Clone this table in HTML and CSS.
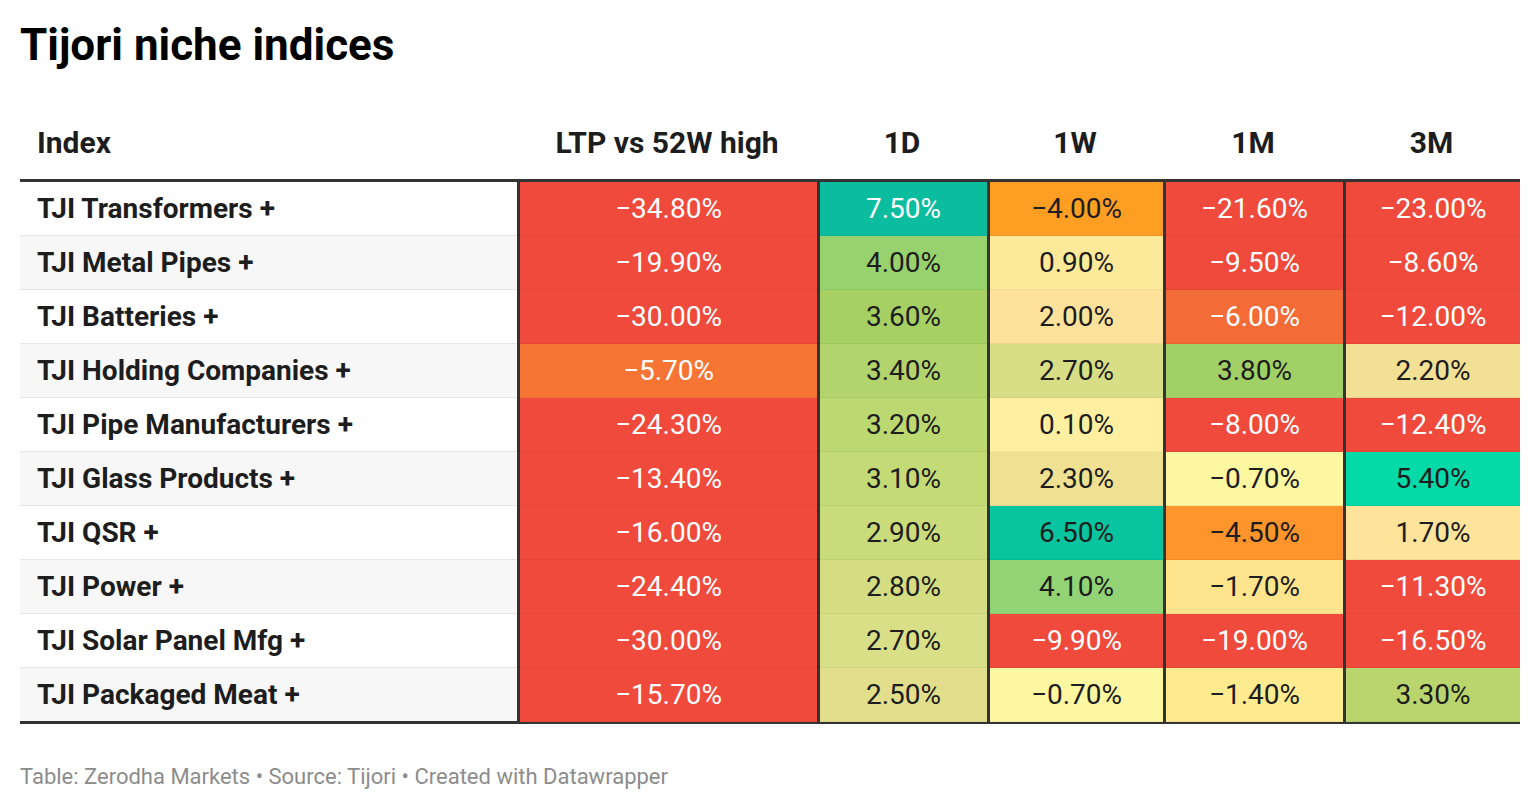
FILE: index.html
```html
<!DOCTYPE html>
<html lang="en">
<head>
<meta charset="utf-8">
<title>Tijori niche indices</title>
<link rel="stylesheet" href="styles.css">
</head>
<body>
<div class="chart">
  <h1 class="title">Tijori niche indices</h1>
  <div class="table">
    <div class="row head">
      <div class="cell name">Index</div>
      <div class="cell num">LTP vs 52W high</div>
      <div class="cell num">1D</div>
      <div class="cell num">1W</div>
      <div class="cell num">1M</div>
      <div class="cell num">3M</div>
    </div>
    <div class="row">
      <div class="cell name">TJI Transformers +</div>
      <div class="cell num red">−34.80%</div>
      <div class="cell num light" style="background:#0bbc9f">7.50%</div>
      <div class="cell num" style="background:#fe9f24">−4.00%</div>
      <div class="cell num red">−21.60%</div>
      <div class="cell num red">−23.00%</div>
    </div>
    <div class="row alt">
      <div class="cell name">TJI Metal Pipes +</div>
      <div class="cell num red">−19.90%</div>
      <div class="cell num" style="background:#98d26f">4.00%</div>
      <div class="cell num" style="background:#fde99a">0.90%</div>
      <div class="cell num red">−9.50%</div>
      <div class="cell num red">−8.60%</div>
    </div>
    <div class="row">
      <div class="cell name">TJI Batteries +</div>
      <div class="cell num red">−30.00%</div>
      <div class="cell num" style="background:#a6d064">3.60%</div>
      <div class="cell num" style="background:#fee29b">2.00%</div>
      <div class="cell num light" style="background:#f36b36">−6.00%</div>
      <div class="cell num red">−12.00%</div>
    </div>
    <div class="row alt">
      <div class="cell name">TJI Holding Companies +</div>
      <div class="cell num light" style="background:#f67535">−5.70%</div>
      <div class="cell num" style="background:#b3d46c">3.40%</div>
      <div class="cell num" style="background:#d8de86">2.70%</div>
      <div class="cell num" style="background:#a1d166">3.80%</div>
      <div class="cell num" style="background:#f2e094">2.20%</div>
    </div>
    <div class="row">
      <div class="cell name">TJI Pipe Manufacturers +</div>
      <div class="cell num red">−24.30%</div>
      <div class="cell num" style="background:#bcd870">3.20%</div>
      <div class="cell num" style="background:#fef0a0">0.10%</div>
      <div class="cell num red">−8.00%</div>
      <div class="cell num red">−12.40%</div>
    </div>
    <div class="row alt">
      <div class="cell name">TJI Glass Products +</div>
      <div class="cell num red">−13.40%</div>
      <div class="cell num" style="background:#c4da76">3.10%</div>
      <div class="cell num" style="background:#f0e192">2.30%</div>
      <div class="cell num" style="background:#fef7a1">−0.70%</div>
      <div class="cell num" style="background:#04d9a8">5.40%</div>
    </div>
    <div class="row">
      <div class="cell name">TJI QSR +</div>
      <div class="cell num red">−16.00%</div>
      <div class="cell num" style="background:#cadb7b">2.90%</div>
      <div class="cell num" style="background:#08c49f">6.50%</div>
      <div class="cell num" style="background:#fd942c">−4.50%</div>
      <div class="cell num" style="background:#fee39b">1.70%</div>
    </div>
    <div class="row alt">
      <div class="cell name">TJI Power +</div>
      <div class="cell num red">−24.40%</div>
      <div class="cell num" style="background:#d4dd82">2.80%</div>
      <div class="cell num" style="background:#92d376">4.10%</div>
      <div class="cell num" style="background:#fee48c">−1.70%</div>
      <div class="cell num red">−11.30%</div>
    </div>
    <div class="row">
      <div class="cell name">TJI Solar Panel Mfg +</div>
      <div class="cell num red">−30.00%</div>
      <div class="cell num" style="background:#d8df87">2.70%</div>
      <div class="cell num red">−9.90%</div>
      <div class="cell num red">−19.00%</div>
      <div class="cell num red">−16.50%</div>
    </div>
    <div class="row alt last">
      <div class="cell name">TJI Packaged Meat +</div>
      <div class="cell num red">−15.70%</div>
      <div class="cell num" style="background:#e2de8c">2.50%</div>
      <div class="cell num" style="background:#fef7a1">−0.70%</div>
      <div class="cell num" style="background:#feeb8f">−1.40%</div>
      <div class="cell num" style="background:#bad56d">3.30%</div>
    </div>
  </div>
  <p class="footer">Table: Zerodha Markets • Source: Tijori • Created with Datawrapper</p>
</div>
</body>
</html>
```
FILE: styles.css
```css
* { box-sizing: border-box; }
html, body {
  margin: 0;
  padding: 0;
  background: #ffffff;
}
body {
  font-family: Roboto, "Liberation Sans", sans-serif;
  color: #1d1d1d;
}
.chart {
  padding: 18px 20px 0 20px;
  width: 1540px;
}
.title {
  margin: 0;
  font-size: 44px;
  line-height: 54px;
  font-weight: 700;
  color: #000;
}
.table {
  margin-top: 39px;
  width: 1500px;
  border-bottom: 3px solid #333333;
}
.row {
  display: grid;
  grid-template-columns: 497px 300px 170px 176px 180px 177px;
  height: 54px;
  border-bottom: 1px solid #e6e6e6;
}
.row.alt { background: #f7f7f7; }
.row.last { border-bottom: none; height: 53px; }
.row.head {
  height: 71px;
  border-bottom: 3px solid #333333;
  background: transparent;
}
.cell {
  display: flex;
  align-items: center;
  font-size: 28px;
  line-height: 34px;
}
.cell.name {
  padding-left: 17px;
  font-weight: 700;
  color: #1d1d1d;
}
.cell.num {
  justify-content: center;
  border-left: 3px solid #333333;
  margin-bottom: -1px;
  box-shadow: inset 0 -1px 0 rgba(0, 0, 0, 0.05);
}
.head .cell {
  align-items: flex-end;
  padding-bottom: 18px;
  font-size: 30px;
  line-height: 36px;
  font-weight: 700;
  border-left: none;
  margin-bottom: 0;
  box-shadow: none;
}
.red {
  background: #ef4a3c;
  color: #ffffff;
}
.light { color: #ffffff; }
.footer {
  margin: 40px 0 0 0;
  font-size: 22px;
  line-height: 26px;
  color: #8c8c8c;
}
```
